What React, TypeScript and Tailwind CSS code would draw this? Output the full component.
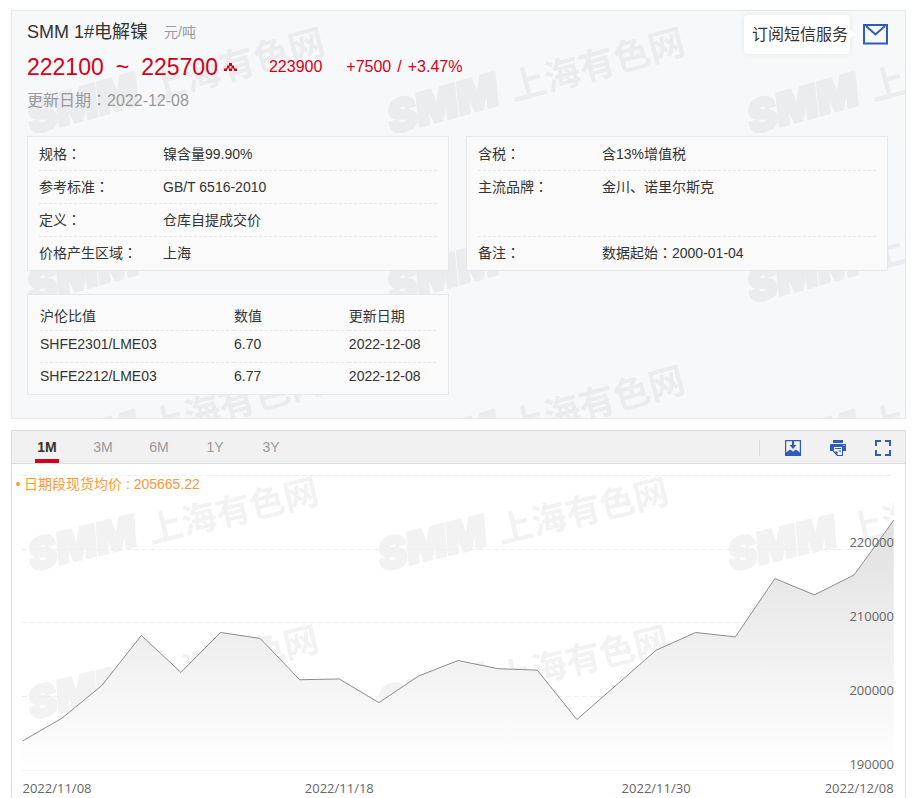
import { useState } from "react";

interface Spec {
  label: string;
  value: string;
  tall?: boolean;
}

const LEFT_SPECS: Spec[] = [
  { label: "规格：", value: "镍含量99.90%" },
  { label: "参考标准：", value: "GB/T 6516-2010" },
  { label: "定义：", value: "仓库自提成交价" },
  { label: "价格产生区域：", value: "上海" },
];

const RIGHT_SPECS: Spec[] = [
  { label: "含税：", value: "含13%增值税" },
  { label: "主流品牌：", value: "金川、诺里尔斯克", tall: true },
  { label: "备注：", value: "数据起始：2000-01-04" },
];

const RATIOS = [
  { name: "SHFE2301/LME03", value: "6.70", date: "2022-12-08" },
  { name: "SHFE2212/LME03", value: "6.77", date: "2022-12-08" },
];

const RANGES = ["1M", "3M", "6M", "1Y", "3Y"];

const PRICES = [
  194000, 197100, 201500, 208300, 203300, 208700, 207900, 202300, 202400,
  199200, 202800, 204900, 203800, 203600, 196900, 201600, 206300, 208700,
  208100, 216000, 213800, 216500, 223900,
];

const DATES = [
  { index: 0, text: "2022/11/08", anchor: "start" as const },
  { index: 8, text: "2022/11/18", anchor: "middle" as const },
  { index: 16, text: "2022/11/30", anchor: "middle" as const },
  { index: 22, text: "2022/12/08", anchor: "end" as const },
];

const GRID = [230000, 220000, 210000, 200000, 190000];

const chartX = (i: number) => 10.5 + i * 39.6;
const chartY = (v: number) => 306.5 - (v - 190000) * 0.00738;

// the full-width colon sits in the middle of its box in the TC face
function WithColon({ text }: { text: string }) {
  const [before, after] = text.split("：");
  if (after === undefined) return <>{text}</>;
  return (
    <>
      {before}
      <span className="font-['Noto_Sans_CJK_TC',sans-serif] leading-none">：</span>
      {after}
    </>
  );
}

function WatermarkTile({ id, width, height, top, scale, angle, color }: {
  id: string;
  width: number;
  height: number;
  top: number;
  scale: number;
  angle: number;
  color: string;
}) {
  return (
    <pattern id={id} width={width} height={height} patternUnits="userSpaceOnUse">
      <g transform={`translate(20 ${top}) scale(${scale}) rotate(${angle})`} fill={color}>
        <text
          className="font-['Inter',sans-serif] text-[44px] font-black italic"
          stroke={color}
          strokeWidth="3"
          strokeLinejoin="round"
        >
          SMM
        </text>
        <text x="126" y="1" className="font-['Noto_Sans_CJK_SC',sans-serif] text-[36px] font-bold">
          上海有色网
        </text>
      </g>
    </pattern>
  );
}

function SpecBox({ specs }: { specs: Spec[] }) {
  return (
    <dl className="border border-[#e7e8e9] bg-[#fafafa] px-[11px] pt-px">
      {specs.map((s) => (
        <div
          key={s.label}
          className={`flex border-b border-dashed border-[#e6e6e6] leading-8 last:border-b-0 ${
            s.tall ? "h-[66px]" : "h-[33px]"
          }`}
        >
          <dt className="w-[124px] shrink-0">
            <WithColon text={s.label} />
          </dt>
          <dd>
            <WithColon text={s.value} />
          </dd>
        </div>
      ))}
    </dl>
  );
}

function PriceChart() {
  const line = PRICES.map((p, i) => `${chartX(i)},${chartY(p)}`).join(" ");
  const base = chartY(190000);

  return (
    <svg viewBox="0 0 893 335" className="block w-full" role="img" aria-label="SMM 1#电解镍">
      <defs>
        <WatermarkTile id="mark-chart" width={350} height={148} top={107} scale={0.97} angle={-13.5} color="#f2f2f2" />
        <linearGradient id="area" x1="0" y1="0" x2="0" y2="1">
          <stop offset="0" stopColor="#e0e0e0" />
          <stop offset="1" stopColor="#ffffff" />
        </linearGradient>
      </defs>
      <rect width="882" height="296" fill="url(#mark-chart)" />
      {GRID.map((v) => (
        <line
          key={v}
          x1="10"
          x2="882"
          y1={Math.floor(chartY(v)) + 0.5}
          y2={Math.floor(chartY(v)) + 0.5}
          stroke="#eeeeee"
          strokeDasharray={v === 190000 ? undefined : "5 3"}
        />
      ))}
      <polygon
        points={`${chartX(0)},${base} ${line} ${chartX(PRICES.length - 1)},${base}`}
        fill="url(#area)"
      />
      <polyline points={line} fill="none" stroke="#8c8c8c" />
      <g className="font-['Open_Sans',sans-serif] text-[13px]" fill="#666666">
        {GRID.slice(1).map((v) => (
          <text key={v} x="882" y={Math.round(chartY(v)) - 2} textAnchor="end">
            {v}
          </text>
        ))}
        {DATES.map((d) => (
          <text key={d.text} x={chartX(d.index)} y="329" textAnchor={d.anchor}>
            {d.text}
          </text>
        ))}
      </g>
    </svg>
  );
}

export default function App() {
  const [range, setRange] = useState("1M");

  return (
    <main className="bg-white pt-[10px] pr-[9px] pl-[11px] font-['Liberation_Sans','Noto_Sans_CJK_SC',sans-serif] text-sm text-[#333]">
      <section className="relative border border-[#e7e8e9] bg-[#f7f8fa] pr-[17px] pb-[23px] pl-[15px]">
        <svg className="absolute inset-0 h-full w-full" aria-hidden="true">
          <defs>
            <WatermarkTile id="mark-card" width={360} height={169} top={123} scale={1} angle={-15.5} color="#ebecee" />
          </defs>
          <rect width="100%" height="100%" fill="url(#mark-card)" />
        </svg>

        <div className="relative">
          <header className="flex h-[125px] items-start justify-between">
            <div className="pt-2">
              <div className="flex items-center gap-4">
                <h1 className="text-lg leading-[26px]">SMM 1#电解镍</h1>
                <span className="text-[#999]">元/吨</span>
              </div>
              <div className="mt-1 flex h-9 items-center text-base text-[#d0021b]">
                <strong className="text-[23px] font-normal">222100</strong>
                <span className="mx-3 text-[23px]">~</span>
                <strong className="text-[23px] font-normal">225700</strong>
                <svg className="ml-1.5 h-[9px] w-[13px]" viewBox="0 0 13 9" fill="currentColor">
                  <path d="M5 0h3v3H5zM3 2.500h2.500v3H3zM7.500 2.500H10v3H7.500zM0 5.500h3v2.500H0zM5 5.500h3v2.500H5zM10 5.500h3v2.500h-3zM2.500 4.500h1v2h-1zM9.500 4.500h1v2h-1z" />
                </svg>
                <span className="ml-8">223900</span>
                <span className="ml-6">+7500</span>
                <span className="mx-1.5">/</span>
                <span>+3.47%</span>
              </div>
              <p className="mt-1 text-base text-[#999]">
                <WithColon text="更新日期：2022-12-08" />
              </p>
            </div>

            <div className="flex items-center gap-[13px] pt-1">
              <div className="relative rounded-sm bg-white pr-0.5 pl-2 text-base leading-[39px] shadow-[0_0_6px_rgba(0,0,0,0.08)]">
                订阅短信服务
                <span className="absolute top-[15px] left-full border-y-4 border-l-[6px] border-y-transparent border-l-white" />
              </div>
              <button aria-label="订阅短信服务" className="text-[#2f5cb8]">
                <svg width="25" height="21" viewBox="0 0 25 21" fill="none" stroke="currentColor" strokeWidth="2">
                  <rect x="1" y="1" width="23" height="18.500" />
                  <path d="M3 2l9.500 8.500L22 2" />
                </svg>
              </button>
            </div>
          </header>

          <div className="grid grid-cols-2 gap-x-[17px] gap-y-[23px]">
            <SpecBox specs={LEFT_SPECS} />
            <SpecBox specs={RIGHT_SPECS} />
            <div className="border border-[#e7e8e9] bg-[#fafafa] px-3 pt-2">
              <table className="w-full border-collapse text-left">
                <thead>
                  <tr className="h-[27px] border-b border-dashed border-[#e6e6e6]">
                    <th className="w-[49%] p-0 font-normal">沪伦比值</th>
                    <th className="w-[29%] p-0 font-normal">数值</th>
                    <th className="p-0 font-normal">更新日期</th>
                  </tr>
                </thead>
                <tbody>
                  {RATIOS.map((r) => (
                    <tr
                      key={r.name}
                      className="h-8 border-b border-dashed border-[#e6e6e6] last:border-b-0"
                    >
                      <td className="p-0 pb-1">{r.name}</td>
                      <td className="p-0 pb-1">{r.value}</td>
                      <td className="p-0 pb-1">{r.date}</td>
                    </tr>
                  ))}
                </tbody>
              </table>
            </div>
          </div>
        </div>
      </section>

      <section className="mt-[11px] border border-b-0 border-[#dddddd] bg-white">
        <div className="flex h-[33px] items-center justify-between border-b border-[#dddddd] bg-[#f1f1f1] pr-[14px] pl-[7px]">
          <div role="tablist" className="flex h-full">
            {RANGES.map((r) => (
              <button
                key={r}
                role="tab"
                aria-selected={range === r}
                onClick={() => setRange(r)}
                className={`relative h-full w-14 ${range === r ? "font-bold text-[#333]" : "text-[#999]"}`}
              >
                {r}
                {range === r && (
                  <span className="absolute inset-x-4 bottom-0 h-1 bg-[#d0021b]" />
                )}
              </button>
            ))}
          </div>

          <div className="flex items-center pt-0.5 text-[#2f5cb8]">
            <span className="mr-[25px] h-4 w-px bg-[#dddddd]" />
            <button aria-label="保存图片" className="mr-[29px]">
              <svg width="16" height="16" viewBox="0 0 16 16" fill="currentColor">
                <path fillRule="evenodd" d="M0 0h16v16H0zM1.200 1.200v11.300l3.800-3 2 1.300 1 1 1-1 2-1.300 3.800 3V1.200z" />
                <path d="M7 1h2v4h2.500L8 9 4.500 5H7z" />
              </svg>
            </button>
            <button aria-label="打印" className="mr-[29px]">
              <svg width="16" height="16" viewBox="0 0 16 16" fill="currentColor">
                <path d="M3 0h10v3H3zM0 5q0-1 1-1h14q1 0 1 1v6h-3V7.500H3V11H0z" />
                <path fill="#f1f1f1" d="M13.500 5h1v1h-1zM4 7h8.500v8.500H7L4 12z" />
                <path d="M12 7h1v9H7v-1h5zM3 7h1v4.500h3.500V16H7l-4-4.500zM5 8h6v1H5zM8.500 10.500H11v1H8.500z" />
              </svg>
            </button>
            <button aria-label="全屏">
              <svg width="16" height="16" viewBox="0 0 16 16" fill="none" stroke="currentColor" strokeWidth="2">
                <path d="M1 6V1h5M10 1h5v5M15 10v5h-5M6 15H1v-5" />
              </svg>
            </button>
          </div>
        </div>

        <div className="relative">
          <p className="absolute top-[10px] left-1 flex items-center gap-1 text-[#ff9933]">
            <span className="h-1 w-1 rounded-full bg-[#ff9933]" />
            日期段现货均价 : 205665.22
          </p>
          <PriceChart />
        </div>
      </section>
    </main>
  );
}
